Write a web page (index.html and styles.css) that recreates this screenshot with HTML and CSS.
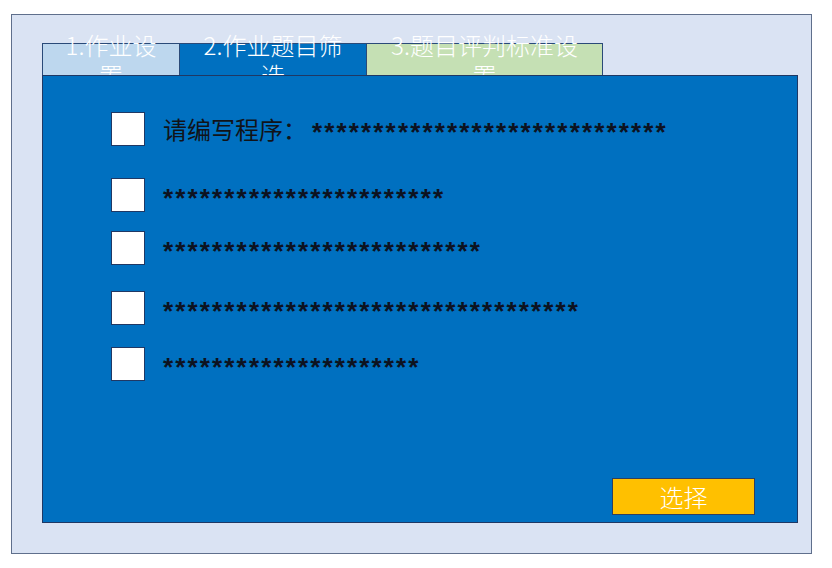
FILE: index.html
```html
<!DOCTYPE html>
<html lang="zh">
<head>
<meta charset="utf-8">
<title>作业题目筛选</title>
<link rel="stylesheet" href="styles.css">
</head>
<body>
<div class="frame">
  <div class="tabs">
    <div class="tab tab-1"><span class="tab-label">1.作业设置</span></div>
    <div class="tab tab-2"><span class="tab-label">2.作业题目筛选</span></div>
    <div class="tab tab-3"><span class="tab-label">3.题目评判标准设置</span></div>
  </div>
  <div class="panel">
    <div class="list">
      <label class="row"><span class="box"></span><span class="text">请编写程序：<span class="stars stars-after-label">*****************************</span></span></label>
      <label class="row"><span class="box"></span><span class="text"><span class="stars">***********************</span></span></label>
      <label class="row"><span class="box"></span><span class="text"><span class="stars">**************************</span></span></label>
      <label class="row"><span class="box"></span><span class="text"><span class="stars">**********************************</span></span></label>
      <label class="row"><span class="box"></span><span class="text"><span class="stars">*********************</span></span></label>
    </div>
    <div class="actions">
      <button class="btn">选择</button>
    </div>
  </div>
</div>
</body>
</html>
```

FILE: styles.css
```css
* { box-sizing: border-box; }

html, body {
  margin: 0;
  padding: 0;
  background: #ffffff;
}

body {
  font-family: "Noto Sans CJK SC", "Noto Sans", sans-serif;
}

.frame {
  margin: 14px 0 0 11px;
  width: 801px;
  height: 540px;
  background: #dae3f3;
  border: 1px solid #5f6f8c;
  padding: 28px 13px 30px 30px;
  display: flex;
  flex-direction: column;
}

.tabs {
  display: flex;
  height: 32px;
  flex: none;
}

.tab {
  height: 32px;
  border: 1px solid #2a4a78;
  border-bottom: none;
  display: flex;
  align-items: center;
  justify-content: center;
  padding: 0 18px;
  color: #ffffff;
  font-size: 24px;
  font-weight: 300;
  line-height: 30px;
  text-align: center;
}

.tab + .tab { margin-left: -1px; }

.tab-1 { width: 138px; background: #bdd7ee; }
.tab-2 { width: 188px; background: #0070c0; }
.tab-3 { width: 237px; background: #c5e0b4; }

.tab-label { display: block; }

.panel {
  position: relative;
  flex: 1;
  background: #0070c0;
  border: 1.5px solid #1f3864;
  display: flex;
  flex-direction: column;
  padding: 36px 42px 7px 68px;
}

.list {
  display: flex;
  flex-direction: column;
}

.row {
  display: flex;
  align-items: center;
  gap: 18px;
  height: 34px;
}

.row:nth-child(2) { margin-top: 32px; }
.row:nth-child(3) { margin-top: 19px; }
.row:nth-child(4) { margin-top: 26px; }
.row:nth-child(5) { margin-top: 22px; }

.box {
  width: 34px;
  height: 34px;
  flex: none;
  background: #ffffff;
  border: 1.5px solid #203864;
}

.text {
  font-size: 24px;
  color: #111318;
  white-space: nowrap;
  line-height: 34px;
}

.stars {
  display: inline-block;
  font-family: "Liberation Sans", sans-serif;
  font-size: 26px;
  font-weight: 700;
  letter-spacing: 2.15px;
  line-height: 26px;
  color: #0d1220;
  transform: translateY(2px);
}

.stars-after-label { margin-left: 5px; }

.actions {
  margin-top: auto;
  display: flex;
  justify-content: flex-end;
}

.btn {
  width: 143px;
  height: 37px;
  background: #ffc000;
  border: 1.5px solid #2f3f5f;
  color: #ffffff;
  font-family: "Noto Sans CJK SC", sans-serif;
  font-size: 24px;
  font-weight: 300;
  line-height: 1;
  padding: 0;
}
```
